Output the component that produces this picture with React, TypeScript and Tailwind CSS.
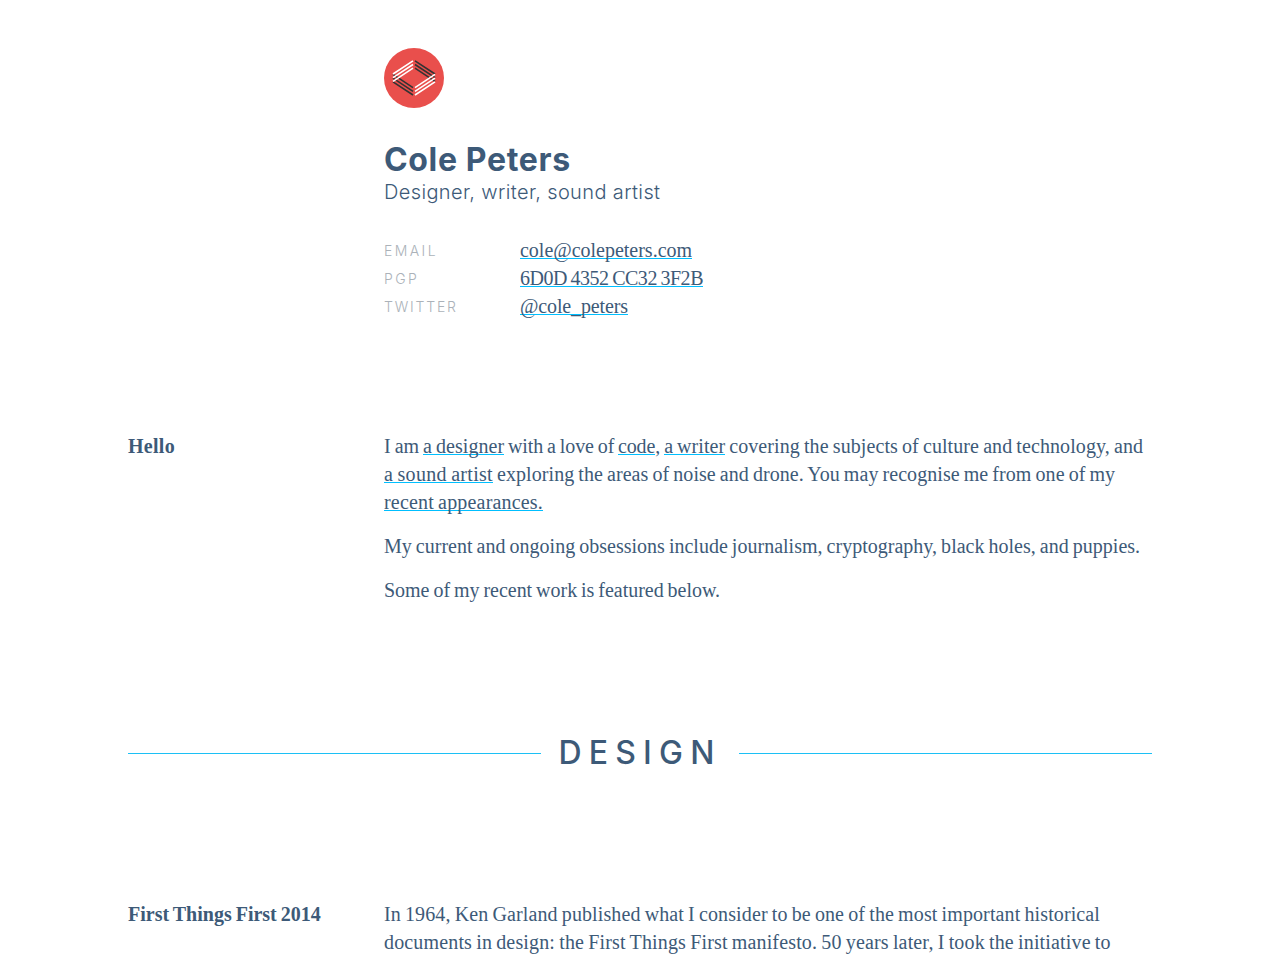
import type { ReactNode } from "react";

const link = "border-b border-[#00bfff] inline-block h-[19px] leading-[21px] whitespace-pre align-baseline";

function Link({ children, className }: { children: ReactNode; className: string }) {
  return <a href="#" className={`${link} ${className}`}>{children}</a>;
}

function Line({ children, className = "" }: { children: ReactNode; className?: string }) {
  return <span className={`block h-7 whitespace-pre ${className}`}>{children}</span>;
}

function Logo() {
  const offsets = [0, 3.7, 7.4];
  return (
    <svg width="60" height="60" viewBox="0 0 60 60" className="block">
      <circle cx="30" cy="30" r="30" fill="#e94f4c" />
      <g stroke="#333" strokeWidth="1.6">
        {offsets.map((o) => <path key={o} d={`M31 ${12.8 + o}L51 ${26 + o}M9 ${26.4 + o}L29 ${39.6 + o}`} />)}
      </g>
      <g stroke="#fff" strokeWidth="1.6">
        {offsets.map((o) => <path key={o} d={`M9 ${26 + o}L29 ${12.8 + o}M31 ${39.6 + o}L51 ${26.4 + o}`} />)}
      </g>
    </svg>
  );
}

function Contact({ label, labelClass, children }: { label: string; labelClass: string; children: ReactNode }) {
  return (
    <div className="flex h-7 items-center">
      <dt className={`w-[136px] pt-0.5 font-['Inter',sans-serif] text-[14px] font-light text-[#abb2b9] ${labelClass}`}>{label}</dt>
      <dd>{children}</dd>
    </div>
  );
}

export default function App() {
  return (
    <div className="h-[960px] overflow-hidden bg-white px-32 pt-12 font-['Liberation_Serif',serif] text-[20px] leading-7 text-[#3d5a78] [word-spacing:-1px]">
      <header className="ml-64">
        <Logo />
        <h1 className="mt-8 h-10 font-['Inter',sans-serif] text-[32px] leading-10 font-bold tracking-[0.65px] [word-spacing:0px]">Cole Peters</h1>
        <p className="-mt-px h-[26px] font-['Inter',sans-serif] text-[20px] leading-[26px] font-light tracking-[0.37px] [word-spacing:0px]">Designer, writer, sound artist</p>
        <dl className="mt-[31px]">
          <Contact label="EMAIL" labelClass="tracking-[2.4px]"><Link className="tracking-[-0.01px]">cole@colepeters.com</Link></Contact>
          <Contact label="PGP" labelClass="tracking-[2.4px]"><Link className="tracking-[-0.475px]">6D0D 4352 CC32 3F2B</Link></Contact>
          <Contact label="TWITTER" labelClass="tracking-[1.8px]"><Link className="tracking-[-0.124px]">@cole_peters</Link></Contact>
        </dl>
      </header>

      <section className="mt-28 flex">
        <h2 className="w-64 shrink-0 font-bold tracking-[0.29px]">Hello</h2>
        <div>
          <p>
            <Line>
              <span>I am </span>
              <Link className="tracking-[0.037px]">a designer</Link>
              <span className="tracking-[-0.096px]"> with a love of </span>
              <Link className="tracking-[-0.188px]">code</Link>
              <span>, </span>
              <Link className="tracking-[0.046px]">a writer</Link>
              <span className="tracking-[0.088px]"> covering the subjects of culture and technology, and</span>
            </Line>
            <Line>
              <Link className="tracking-[0.31px]">a sound artist</Link>
              <span className="tracking-[0.06px]"> exploring the areas of noise and drone. You may recognise me from one of my</span>
            </Line>
            <Line><Link className="tracking-[0.18px]">recent appearances.</Link></Line>
          </p>
          <p className="mt-4"><Line className="tracking-[0.014px]">My current and ongoing obsessions include journalism, cryptography, black holes, and puppies.</Line></p>
          <p className="mt-4"><Line className="tracking-[-0.028px]">Some of my recent work is featured below.</Line></p>
        </div>
      </section>

      <div className="mt-[129px] flex h-10 items-center justify-between">
        <span className="h-px w-[413px] bg-[#1cc0f5]" />
        <h2 className="font-['Inter',sans-serif] text-[32px] leading-10 font-medium tracking-[7.2px]">DESIGN</h2>
        <span className="h-px w-[413px] bg-[#1cc0f5]" />
      </div>

      <section className="mt-[127px] flex">
        <h2 className="w-64 shrink-0 font-bold">First Things First 2014</h2>
        <p>
          <Line className="tracking-[0.113px]">In 1964, Ken Garland published what I consider to be one of the most important historical</Line>
          <Line className="tracking-[0.154px]">documents in design: the First Things First manifesto. 50 years later, I took the initiative to</Line>
        </p>
      </section>
    </div>
  );
}
